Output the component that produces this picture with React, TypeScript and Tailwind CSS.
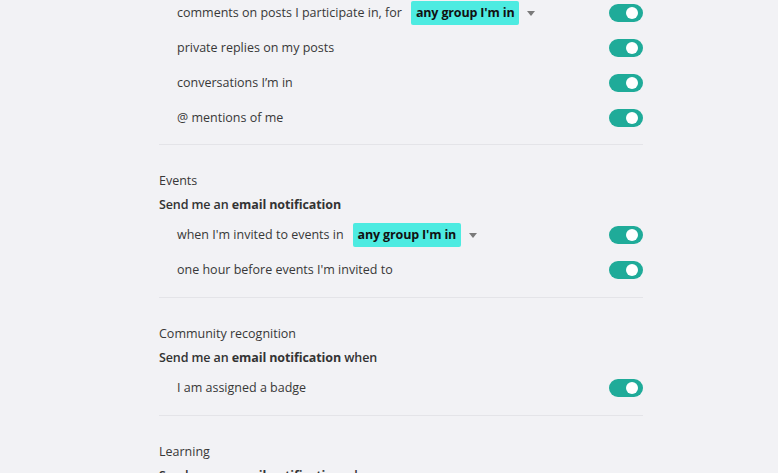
import React from 'react'

type Row = { label: string; group?: boolean }

function Toggle() {
  return (
    <span className="relative inline-flex h-[18px] w-[34px] shrink-0 items-center rounded-full bg-[#1fab99]">
      <span className="absolute right-[5px] h-[12px] w-[12px] rounded-full bg-white" />
    </span>
  )
}

function GroupPill() {
  return (
    <span className="ml-[9px] inline-flex items-center">
      <span className="rounded-[2px] bg-[#4debe1] px-[5px] leading-[24px] font-bold tracking-[-0.15px] text-[#111]">any group I'm in</span>
      <span className="ml-[8px] h-0 w-0 border-x-[4.5px] border-t-[5px] border-x-transparent border-t-[#7a7a7a]" />
    </span>
  )
}

function Rows({ rows }: { rows: Row[] }) {
  return (
    <div>
      {rows.map((r) => (
        <div key={r.label} className="flex h-[35px] items-center justify-between pl-[18px]">
          <div className="flex items-center pt-[1px]">
            <span>{r.label}</span>
            {r.group && <GroupPill />}
          </div>
          <Toggle />
        </div>
      ))}
    </div>
  )
}

function Section({ title, when, rows, last }: { title: string; when?: boolean; rows: Row[]; last?: boolean }) {
  return (
    <section className={last ? 'pt-[24px]' : 'border-b border-[#e4e4e8] pt-[24px] pb-[10px]'}>
      <div className="leading-[24px]">{title}</div>
      <div className="leading-[24px] font-semibold tracking-[-0.1px] text-[#333]">
        Send me an <b className="font-bold">email notification</b>
        {when && ' when'}
      </div>
      <div>
        <Rows rows={rows} />
      </div>
    </section>
  )
}

export default function App() {
  return (
    <div className="h-[473px] overflow-hidden bg-[#f2f2f5] text-[12.5px] text-[#383838]" style={{ fontFamily: '"Open Sans", sans-serif' }}>
      <div className="ml-[159px] w-[484px]">
        <div className="-mt-[5px] border-b border-[#e4e4e8] pb-[9px]">
          <Rows
            rows={[
              { label: 'comments on posts I participate in, for', group: true },
              { label: 'private replies on my posts' },
              { label: 'conversations I’m in' },
              { label: '@ mentions of me' },
            ]}
          />
        </div>
        <Section
          title="Events"
          rows={[
            { label: "when I'm invited to events in", group: true },
            { label: "one hour before events I'm invited to" },
          ]}
        />
        <Section title="Community recognition" when rows={[{ label: 'I am assigned a badge' }]} />
        <Section title="Learning" when last rows={[{ label: 'I complete a course' }]} />
      </div>
    </div>
  )
}
